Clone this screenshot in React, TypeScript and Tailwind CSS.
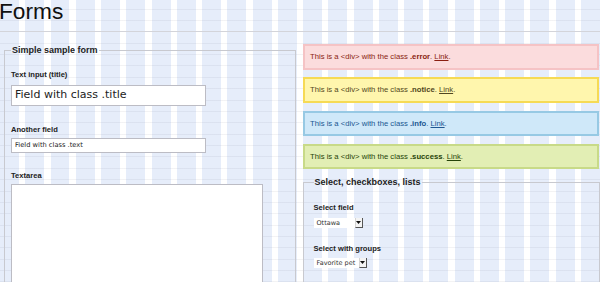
import React from 'react';

const sans = "font-['Liberation_Sans',Arial,Helvetica,sans-serif]";
const lucida = "font-['DejaVu_Sans','Lucida_Grande',sans-serif]";

const alerts = [
  { name: '.error', box: 'bg-[#fbdcdd] border-[#f5c3c5] text-[#8a1f11]' },
  { name: '.notice', box: 'bg-[#fff6ad] border-[#f6da55] text-[#514721]' },
  { name: '.info', box: 'bg-[#cfe8f9] border-[#97c9e4] text-[#205791]' },
  { name: '.success', box: 'bg-[#e2eeb4] border-[#c8da88] text-[#264409]' },
];

const Label = ({ children, className = '' }: { children: React.ReactNode; className?: string }) => (
  <label className={`block text-[7.6px] leading-[9px] font-bold text-[#222] ${className}`}>{children}</label>
);

const FakeSelect = ({ value, width }: { value: string; width: string }) => (
  <div className={`flex h-[10px] ${width} bg-white`}>
    <span className={`flex-1 pl-[3px] text-[6.5px] leading-[10px] text-[#333] ${lucida}`}>{value}</span>
    <span className="flex h-[10px] w-[8px] items-center justify-center border-l border-[#d4d4d4] border-r border-b border-r-[#555] border-b-[#555] bg-[#f4f4f4]">
      <svg width="5" height="3" viewBox="0 0 5 3">
        <polygon points="0,0 5,0 2.5,3" fill="#111" />
      </svg>
    </span>
  </div>
);

export default function App() {
  return (
    <div
      className={`relative h-[282px] w-[600px] overflow-hidden bg-white bg-[image:repeating-linear-gradient(to_bottom,transparent_0_8.6px,rgba(30,30,60,0.055)_8.6px_9.6px,transparent_9.6px_11.37px),repeating-linear-gradient(to_right,#e6edfa_0_18.95px,transparent_18.95px_25.26px)] ${sans}`}
    >
      <div className="h-[31px]">
        <h1 className="-ml-[1px] text-[22.7px] font-normal leading-none text-[#111]">Forms</h1>
      </div>
      <hr className="h-px border-0 bg-[#d3d4da]" />

      <div className="mt-[12px] flex">
        {/* left column */}
        <div className="w-[303px] pl-[4px]">
          <fieldset className="mt-[0.5px] h-[300px] w-[292px] border border-[#c8c9cf] pl-[6px]">
            <legend className="px-[1px] text-[9px] font-bold leading-[11px] text-[#222]">Simple sample form</legend>

            <Label className="mt-[14px]">Text input (title)</Label>
            <div className={`mt-[6.5px] flex h-[21px] w-[195px] items-center border border-[#bcbcc4] bg-white pl-[3px] text-[11px] text-[#222] ${lucida}`}>
              Field with class .title
            </div>

            <Label className="mt-[18.5px]">Another field</Label>
            <div className={`mt-[4.5px] flex h-[15px] w-[195px] items-center border border-[#bcbcc4] bg-white pl-[3px] text-[6.7px] text-[#222] ${lucida}`}>
              Field with class .text
            </div>

            <Label className="mt-[17.5px]">Textarea</Label>
            <div className="mt-[4.5px] h-[160px] w-[252px] border border-[#bcbcc4] bg-white" />
          </fieldset>
        </div>

        {/* right column */}
        <div className="w-[297px]">
          <div className="flex w-[295.5px] flex-col gap-[7.83px]">
            {alerts.map((a) => (
              <div key={a.name} className={`flex h-[25.5px] items-center border-2 px-[5px] text-[7.7px] ${a.box}`}>
                <span>
                  This is a &lt;div&gt; with the class <b>{a.name}</b>. <a className="underline">Link</a>.
                </span>
              </div>
            ))}
          </div>

          <fieldset className="mt-[8px] h-[200px] w-[297px] border border-[#c8c9cf] pl-[9.5px]">
            <legend className="px-[1px] text-[9px] font-bold leading-[11px] text-[#222]">Select, checkboxes, lists</legend>

            <Label className="mt-[15px]">Select field</Label>
            <div className="mt-[5.5px]">
              <FakeSelect value="Ottawa" width="w-[49px]" />
            </div>

            <Label className="mt-[16.5px]">Select with groups</Label>
            <div className="mt-[4.5px]">
              <FakeSelect value="Favorite pet" width="w-[53px]" />
            </div>
          </fieldset>
        </div>
      </div>
    </div>
  );
}
